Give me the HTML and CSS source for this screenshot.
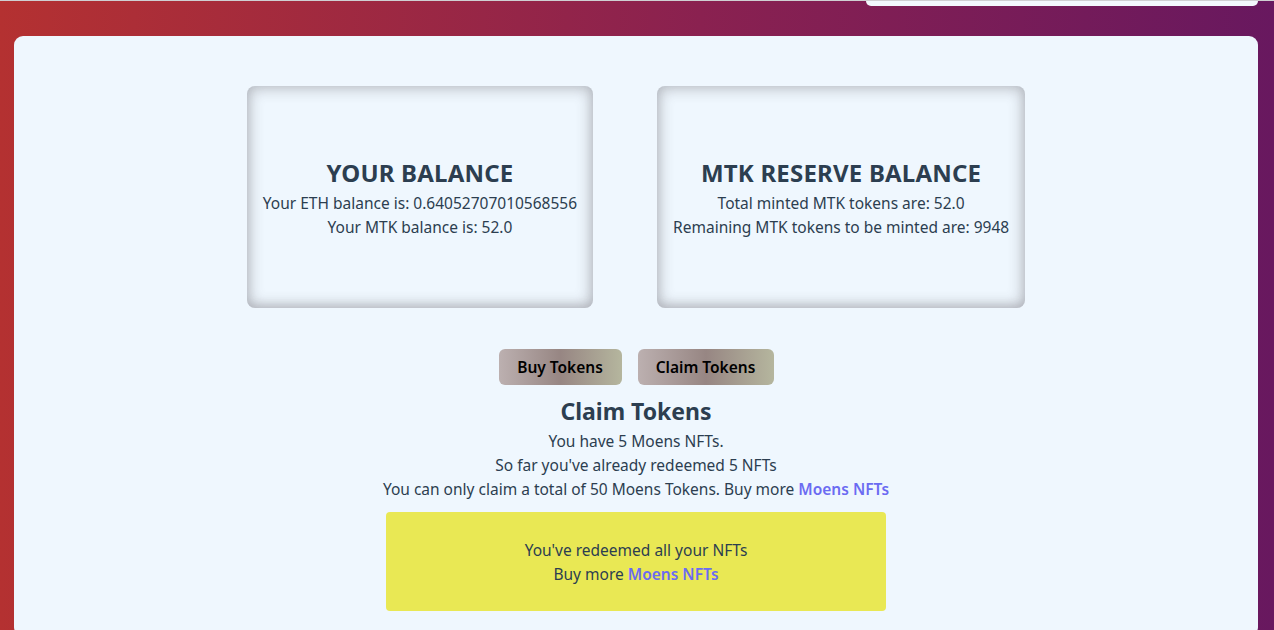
FILE: index.html
```html
<!DOCTYPE html>
<html>
<head>
<meta charset="utf-8">
<link rel="stylesheet" href="styles.css">
</head>
<body>
<header class="topbar">
  <div class="top-tab"></div>
</header>
<main class="panel">
  <section class="cards">
    <div class="card">
      <h2 class="card-title">YOUR BALANCE</h2>
      <p class="line">Your ETH balance is: 0.64052707010568556</p>
      <p class="line">Your MTK balance is: 52.0</p>
    </div>
    <div class="card">
      <h2 class="card-title">MTK RESERVE BALANCE</h2>
      <p class="line">Total minted MTK tokens are: 52.0</p>
      <p class="line">Remaining MTK tokens to be minted are: 9948</p>
    </div>
  </section>
  <div class="actions">
    <button class="btn">Buy Tokens</button>
    <button class="btn btn-wide">Claim Tokens</button>
  </div>
  <section class="claim">
    <h2 class="claim-title">Claim Tokens</h2>
    <p class="line">You have 5 Moens NFTs.</p>
    <p class="line">So far you've already redeemed 5 NFTs</p>
    <p class="line">You can only claim a total of 50 Moens Tokens. Buy more <a class="link" href="#">Moens NFTs</a></p>
    <div class="notice">
      <p class="line">You've redeemed all your NFTs</p>
      <p class="line">Buy more <a class="link" href="#">Moens NFTs</a></p>
    </div>
  </section>
</main>
</body>
</html>
```

FILE: styles.css
```css
* { box-sizing: border-box; }
html, body { height: 100%; }
body {
  margin: 0;
  font-family: "Noto Sans", "DejaVu Sans", sans-serif;
  font-size: 15.5px;
  color: #2c3e50;
  background: linear-gradient(to right, #b43131 0%, #8a2150 55%, #68185f 100%);
  overflow: hidden;
}
.topbar {
  height: 36px;
  border-top: 1px solid #cfcfd2;
  display: flex;
  justify-content: flex-end;
  padding-right: 16px;
}
.top-tab {
  width: 392px;
  height: 5px;
  background: #f3f8fd;
  border-radius: 0 0 6px 6px;
}
.panel {
  margin: 0 16px 0 14px;
  height: 600px;
  background: #eff7fe;
  border-radius: 9px;
  padding-top: 50px;
  display: flex;
  flex-direction: column;
  align-items: center;
}
.cards {
  display: flex;
  gap: 64px;
}
.card {
  height: 222px;
  padding: 0 16px;
  border-radius: 8px;
  display: flex;
  flex-direction: column;
  justify-content: center;
  align-items: center;
  text-align: center;
  box-shadow: inset 0 0 14px 3px rgba(70, 66, 72, 0.3), inset 0 -3px 8px rgba(70, 66, 72, 0.12);
}
.card-title {
  margin: 0;
  font-size: 24px;
  font-weight: 700;
  line-height: 36px;
  letter-spacing: 0.2px;
}
.line {
  margin: 0;
  line-height: 24px;
  text-align: center;
}
.actions {
  display: flex;
  gap: 16px;
  margin-top: 41px;
}
.btn {
  height: 36px;
  width: 123px;
  border: none;
  border-radius: 6px;
  font-family: inherit;
  font-size: 15.5px;
  font-weight: 600;
  color: #000;
  background: linear-gradient(to right, #bcb0b0 0%, #978683 50%, #b5b69e 100%);
}
.btn-wide { width: 136px; }
.claim {
  display: flex;
  flex-direction: column;
  align-items: center;
  margin-top: 11px;
}
.claim-title {
  margin: 0;
  font-size: 23px;
  font-weight: 700;
  line-height: 30px;
}
.claim-title + .line { margin-top: 3px; }
.link {
  color: #6b6bf2;
  font-weight: 600;
  text-decoration: none;
}
.notice {
  margin-top: 11px;
  width: 500px;
  height: 99px;
  background: #e9e854;
  border-radius: 4px;
  display: flex;
  flex-direction: column;
  justify-content: center;
}
```
